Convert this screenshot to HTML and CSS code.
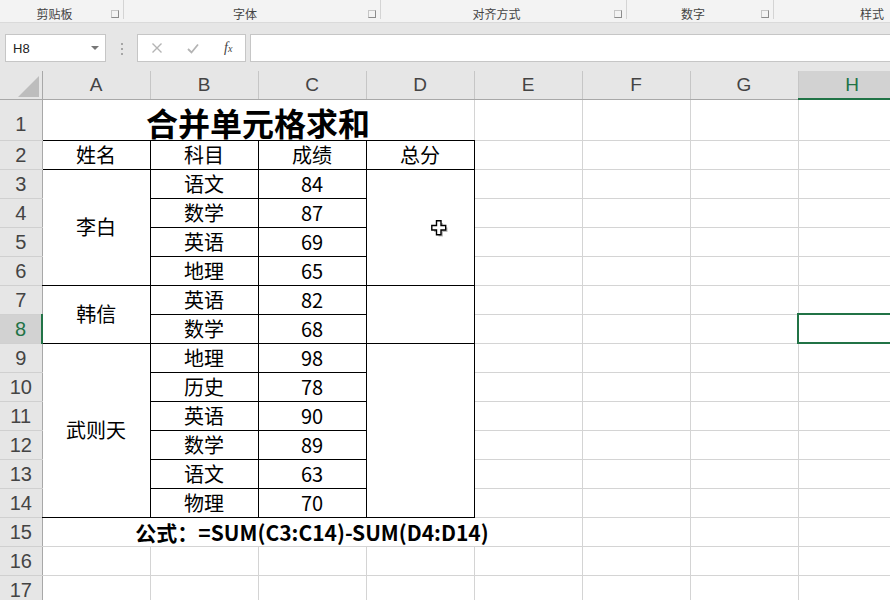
FILE: index.html
```html
<!DOCTYPE html>
<html lang="zh-CN">
<head>
    <meta charset="UTF-8">
    <title>合并单元格求和</title>
    <link rel="stylesheet" href="styles.css">
</head>
<body>
    <div class="ribbon">
        <div class="group g-clip"><span class="label">剪贴板</span><i class="launcher"></i></div>
        <div class="group g-font"><span class="label">字体</span><i class="launcher"></i></div>
        <div class="group g-align"><span class="label">对齐方式</span><i class="launcher"></i></div>
        <div class="group g-number"><span class="label">数字</span><i class="launcher"></i></div>
        <div class="group g-style"><span class="label">样式</span></div>
    </div>

    <div class="formula-bar">
        <div class="name-box"><span>H8</span><i class="drop"></i></div>
        <div class="grip"><i></i><i></i><i></i></div>
        <div class="fx-buttons">
            <svg class="btn-cancel" width="12" height="12" viewBox="0 0 12 12"><path d="M1.5 1.5 L10.5 10.5 M10.5 1.5 L1.5 10.5" stroke="#b4b4b4" stroke-width="1.4" fill="none"/></svg>
            <svg class="btn-enter" width="12" height="11" viewBox="0 0 12 11"><path d="M1 6 L4.5 9.5 L11 1.5" stroke="#b4b4b4" stroke-width="1.8" fill="none"/></svg>
            <span class="fx">f<small>x</small></span>
        </div>
        <div class="formula-input"></div>
    </div>

    <div class="sheet">
        <table class="grid">
            <colgroup>
                <col class="col-head">
                <col class="col-cell"><col class="col-cell"><col class="col-cell"><col class="col-cell">
                <col class="col-cell"><col class="col-cell"><col class="col-cell"><col class="col-cell">
            </colgroup>
            <thead>
                <tr>
                    <th class="corner"><svg width="21" height="21" viewBox="0 0 21 21"><path d="M21 0 V21 H0 Z" fill="#bdbdbd"/></svg></th>
                    <th>A</th><th>B</th><th>C</th><th>D</th><th>E</th><th>F</th><th>G</th><th class="active">H</th>
                </tr>
            </thead>
            <tbody>
                <tr class="r-title">
                    <th>1</th><td class="title" colspan="4">合并单元格求和</td><td></td><td></td><td></td><td></td>
                </tr>
                <tr>
                    <th>2</th><td class="b">姓名</td><td class="b">科目</td><td class="b">成绩</td><td class="b">总分</td><td></td><td></td><td></td><td></td>
                </tr>
                <tr>
                    <th>3</th><td class="b" rowspan="4">李白</td><td class="b">语文</td><td class="b">84</td><td class="b" rowspan="4"></td><td></td><td></td><td></td><td></td>
                </tr>
                <tr>
                    <th>4</th><td class="b">数学</td><td class="b">87</td><td></td><td></td><td></td><td></td>
                </tr>
                <tr>
                    <th>5</th><td class="b">英语</td><td class="b">69</td><td></td><td></td><td></td><td></td>
                </tr>
                <tr>
                    <th>6</th><td class="b">地理</td><td class="b">65</td><td></td><td></td><td></td><td></td>
                </tr>
                <tr>
                    <th>7</th><td class="b" rowspan="2">韩信</td><td class="b">英语</td><td class="b">82</td><td class="b" rowspan="2"></td><td></td><td></td><td></td><td></td>
                </tr>
                <tr>
                    <th class="active">8</th><td class="b">数学</td><td class="b">68</td><td></td><td></td><td></td><td class="selected"></td>
                </tr>
                <tr>
                    <th>9</th><td class="b" rowspan="6">武则天</td><td class="b">地理</td><td class="b">98</td><td class="b" rowspan="6"></td><td></td><td></td><td></td><td></td>
                </tr>
                <tr>
                    <th>10</th><td class="b">历史</td><td class="b">78</td><td></td><td></td><td></td><td></td>
                </tr>
                <tr>
                    <th>11</th><td class="b">英语</td><td class="b">90</td><td></td><td></td><td></td><td></td>
                </tr>
                <tr>
                    <th>12</th><td class="b">数学</td><td class="b">89</td><td></td><td></td><td></td><td></td>
                </tr>
                <tr>
                    <th>13</th><td class="b">语文</td><td class="b">63</td><td></td><td></td><td></td><td></td>
                </tr>
                <tr>
                    <th>14</th><td class="b">物理</td><td class="b">70</td><td></td><td></td><td></td><td></td>
                </tr>
                <tr>
                    <th>15</th><td class="note" colspan="5">公式：=SUM(C3:C14)-SUM(D4:D14)</td><td></td><td></td><td></td>
                </tr>
                <tr>
                    <th>16</th><td></td><td></td><td></td><td></td><td></td><td></td><td></td><td></td>
                </tr>
                <tr>
                    <th>17</th><td></td><td></td><td></td><td></td><td></td><td></td><td></td><td></td>
                </tr>
            </tbody>
        </table>

        <!-- mouse pointer over D5 -->
        <svg class="cursor" width="18" height="18" viewBox="0 0 18 18">
            <path d="M6 1.5 H10.5 V6 H15 V10.5 H10.5 V15 H6 V10.5 H1.5 V6 H6 Z" transform="translate(1.5 1.5)" fill="#777" opacity="0.5"/>
            <path d="M5.5 0.8 H10 V5.5 H14.7 V10 H10 V14.7 H5.5 V10 H0.8 V5.5 H5.5 Z" fill="#fff" stroke="#000" stroke-width="1.4"/>
        </svg>
    </div>
</body>
</html>
```

FILE: styles.css
```css
body {
    margin: 0;
    width: 890px;
    height: 600px;
    overflow: hidden;
    background-color: #e6e6e6;
    font-family: "Noto Sans CJK SC", "Liberation Sans", sans-serif;
}

/* ribbon group labels (top strip) */
.ribbon {
    display: flex;
    height: 23px;
    background-color: #f3f3f3;
    border-bottom: 1px solid #dadada;
    box-sizing: border-box;
    white-space: nowrap;
    overflow: hidden;
}

.group {
    display: flex;
    align-items: flex-end;
    height: 19px;
    flex-shrink: 0;
    box-sizing: border-box;
    border-right: 1px solid #d4d4d4;
    font-size: 12px;
    color: #444;
}

.group .label {
    flex: 1;
    text-align: center;
    line-height: 14px;
    margin-bottom: -2px;
}

.launcher {
    margin: 0 4px 1px 2px;
    width: 6px;
    height: 6px;
    border-right: 1px solid #8c8c8c;
    border-bottom: 1px solid #8c8c8c;
    border-left: 1px solid #c6c6c6;
    border-top: 1px solid #c6c6c6;
}

.g-clip { width: 124px; }
.g-font { width: 257px; }
.g-align { width: 246px; }
.g-number { width: 147px; }
.g-style { width: 196px; border-right: none; }

/* name box + formula bar */
.formula-bar {
    display: flex;
    align-items: flex-start;
    height: 48px;
    padding: 11px 0 0 5px;
    box-sizing: border-box;
}

.name-box {
    display: flex;
    align-items: center;
    justify-content: space-between;
    width: 101px;
    height: 28px;
    box-sizing: border-box;
    padding: 0 6px 0 7px;
    background-color: #fff;
    border: 1px solid #c6c6c6;
    font-family: "Liberation Sans", sans-serif;
    font-size: 13px;
    color: #222;
}

.drop {
    width: 0;
    height: 0;
    border-left: 4px solid transparent;
    border-right: 4px solid transparent;
    border-top: 4px solid #777;
}

.grip {
    display: flex;
    flex-direction: column;
    gap: 3px;
    width: 2px;
    margin: 9px 14px 0 15px;
}

.grip i {
    width: 2px;
    height: 2px;
    background-color: #a6a6a6;
}

.fx-buttons {
    display: flex;
    align-items: center;
    width: 109px;
    height: 28px;
    box-sizing: border-box;
    padding-left: 13px;
    background-color: #fff;
    border: 1px solid #c6c6c6;
}

.btn-enter {
    margin-left: 24px;
}

.fx {
    margin-left: 25px;
    font-family: "Liberation Serif", serif;
    font-style: italic;
    font-size: 14px;
    color: #444;
}

.fx small {
    font-size: 10px;
}

.formula-input {
    flex: 1;
    height: 28px;
    margin-left: 4px;
    box-sizing: border-box;
    background-color: #fff;
    border: 1px solid #c6c6c6;
    border-right: none;
}

/* worksheet */
.sheet {
    position: relative;
    background-color: #fff;
}

.grid {
    border-collapse: collapse;
    table-layout: fixed;
    width: 906px;
}

.col-head { width: 42px; }
.col-cell { width: 108px; }

.grid th,
.grid td {
    padding: 0;
    border-right: 1px solid #d4d4d4;
    border-bottom: 1px solid #d4d4d4;
    text-align: center;
    vertical-align: middle;
    white-space: nowrap;
}

.grid thead tr {
    height: 28px;
}

.grid thead th {
    background-color: #e6e6e6;
    border-right: 1px solid #c6c6c6;
    border-bottom: 1px solid #a8a8a8;
    font-family: "Liberation Sans", sans-serif;
    font-size: 19px;
    font-weight: normal;
    color: #444;
    line-height: 26px;
}

.grid thead th.corner {
    border-right: 1px solid #a8a8a8;
    text-align: right;
    vertical-align: bottom;
}

.corner svg {
    display: block;
    margin: 0 3px 2px auto;
}

.grid tbody tr {
    height: 29px;
}

.grid tbody tr.r-title {
    height: 41px;
}

.grid tbody th {
    background-color: #e6e6e6;
    border-right: 1px solid #a8a8a8;
    border-bottom: 1px solid #d0d0d0;
    font-family: "Liberation Sans", sans-serif;
    font-size: 20px;
    font-weight: normal;
    color: #444;
    line-height: 24px;
}

.grid tbody tr.r-title th {
    padding-top: 8px;
    line-height: 26px;
}

.grid thead th.active {
    background-color: #d2d2d2;
    border-bottom: 2px solid #217346;
    color: #217346;
}

.grid tbody th.active {
    background-color: #d2d2d2;
    border-right: 2px solid #217346;
    color: #217346;
}

.grid td {
    font-size: 20px;
    color: #000;
    line-height: 24px;
}

.grid td.b {
    border-right: 1px solid #000;
    border-bottom: 1px solid #000;
}

.grid td.title {
    border-bottom: 1px solid #000;
    font-size: 32px;
    font-weight: bold;
    line-height: 34px;
    padding-top: 4px;
}

.grid td.note {
    font-size: 21px;
    font-weight: bold;
    line-height: 26px;
}

.grid td.selected {
    outline: 2px solid #217346;
    outline-offset: -1px;
}

.cursor {
    position: absolute;
    left: 431px;
    top: 149px;
}
```
